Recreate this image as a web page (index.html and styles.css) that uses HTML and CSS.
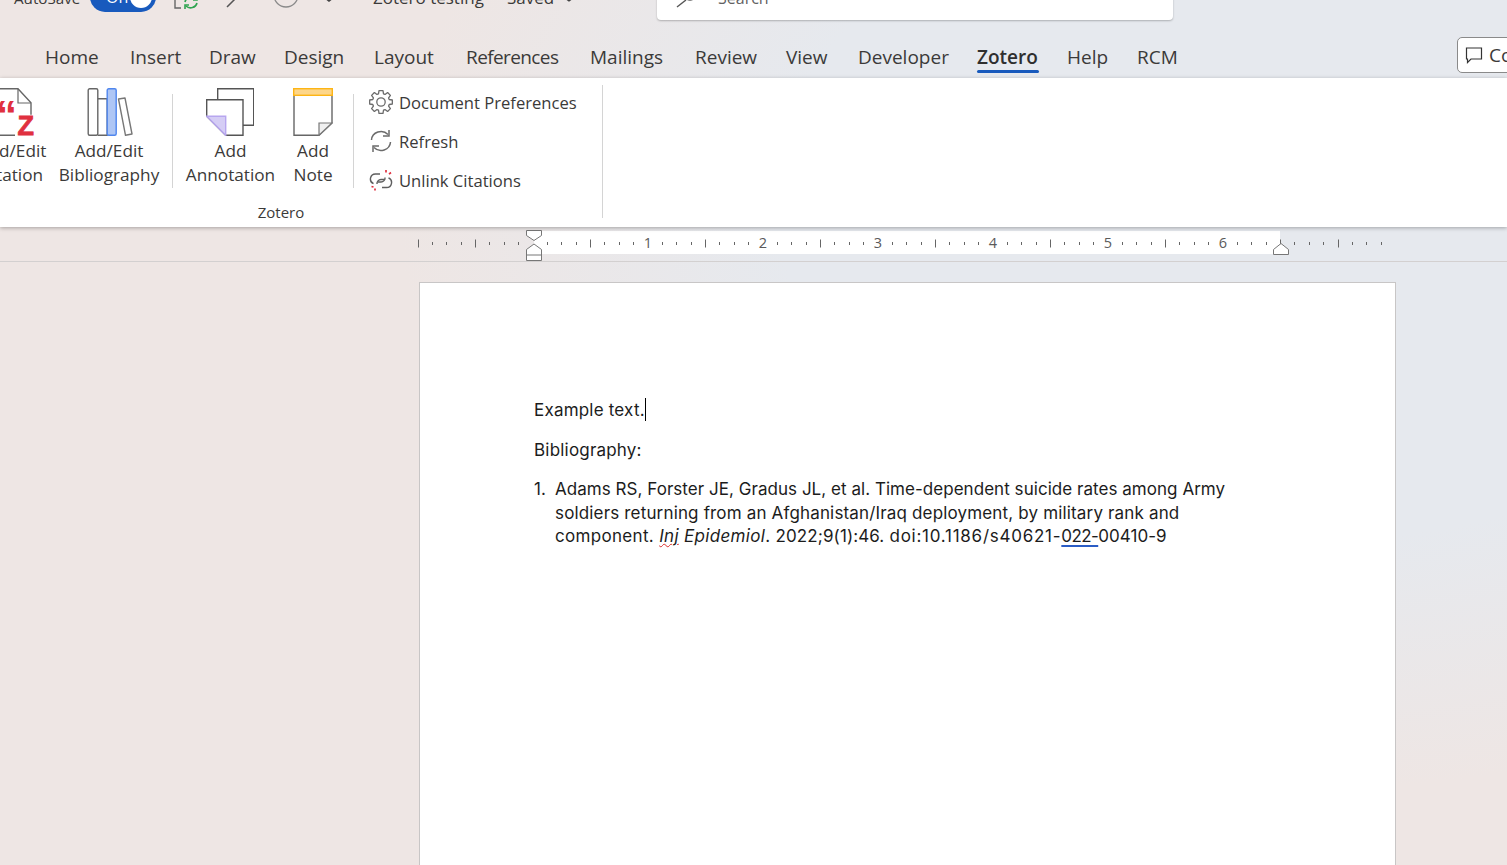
FILE: index.html
```html
<!DOCTYPE html>
<html lang="en">
<head>
    <meta charset="UTF-8">
    <meta name="viewport" content="width=device-width, initial-scale=1.0">
    <title>Zotero testing - Word</title>
    <link rel="stylesheet" href="styles.css">
</head>
<body>
    <div class="titleBar">
        <span class="autosave">AutoSave</span>
        <div class="toggle"><span>On</span><i class="knob"></i></div>
        <svg class="qatIcon saveIcon" width="26" height="24" viewBox="0 0 26 24" fill="none">
            <path d="M8 2H2v20h6" stroke="#666" stroke-width="1.4"/>
            <path d="M12 16a6.5 6 0 0 1 11-3M24 17a6.5 6 0 0 1-11 3" stroke="#2ea44f" stroke-width="1.6"/>
            <path d="M24 10v4h-4M12 23v-4h4" stroke="#2ea44f" stroke-width="1.6"/>
        </svg>
        <svg class="qatIcon redoIcon" width="16" height="24" viewBox="0 0 16 24" fill="none">
            <path d="M1 23L15 9" stroke="#555" stroke-width="1.5"/>
        </svg>
        <svg class="qatIcon circleIcon" width="26" height="26" viewBox="0 0 26 26" fill="none">
            <circle cx="13" cy="13" r="12" stroke="#8a8a8a" stroke-width="1.3"/>
        </svg>
        <svg class="qatIcon moreIcon" width="10" height="6" viewBox="0 0 10 6" fill="none">
            <path d="M1 1l4 3 4-3" stroke="#444" stroke-width="1.5"/>
        </svg>
        <span class="docName">Zotero testing</span>
        <span class="saved">Saved</span>
        <svg class="qatIcon savedChevron" width="10" height="6" viewBox="0 0 10 6" fill="none">
            <path d="M1 1l4 3 4-3" stroke="#444" stroke-width="1.3"/>
        </svg>
        <div class="searchBox">
            <svg width="20" height="14" viewBox="0 0 20 14" fill="none">
                <path d="M1 13L10 6" stroke="#555" stroke-width="1.4"/>
                <circle cx="14" cy="0" r="6" stroke="#555" stroke-width="1.4"/>
            </svg>
            <span>Search</span>
        </div>
    </div>

    <div class="tabs">
        <span class="tab tabFile">File</span>
        <span class="tab">Home</span>
        <span class="tab">Insert</span>
        <span class="tab">Draw</span>
        <span class="tab">Design</span>
        <span class="tab">Layout</span>
        <span class="tab tabTight">References</span>
        <span class="tab">Mailings</span>
        <span class="tab">Review</span>
        <span class="tab">View</span>
        <span class="tab">Developer</span>
        <span class="tab active">Zotero</span>
        <span class="tab">Help</span>
        <span class="tab">RCM</span>
        <div class="commentsBtn">
            <svg width="18" height="18" viewBox="0 0 18 18" fill="none">
                <path d="M1.5 2h15v11H6l-3.5 3.5V13h-1z" stroke="#333" stroke-width="1.2"/>
            </svg>
            <span>Comments</span>
        </div>
    </div>

    <div class="ribbon">
        <div class="ribbonGroup">
            <div class="groupItems">
                <div class="bigBtn citeBtn">
                    <svg width="48" height="48" viewBox="0 0 48 48" fill="none">
                        <path d="M27 47.3H2V0.7h28l13 14v12" stroke="#666" stroke-width="1.4"/>
                        <path d="M30 1v14h13" stroke="#666" stroke-width="1.2"/>
                        <text x="8" y="42" class="citeQuote">“</text>
                        <text x="29.5" y="47" class="citeZ">Z</text>
                    </svg>
                    <span>Add/Edit<br>Citation</span>
                </div>
                <div class="bigBtn bibBtn">
                    <svg width="48" height="48" viewBox="0 0 48 48" fill="none">
                        <rect x="3.2" y="0.7" width="9.6" height="46.6" rx="1.5" stroke="#666" stroke-width="1.4"/>
                        <path d="M12.8 10.7h9.4v36.6h-9.4" stroke="#666" stroke-width="1.4"/>
                        <rect x="22.2" y="0.7" width="9" height="46.6" rx="1.5" fill="#aec6f5" stroke="#4f86ee" stroke-width="1.4"/>
                        <path d="M33.5 11l6.5-1 7 36-6.5 1.3z" stroke="#777" stroke-width="1.4" stroke-linejoin="round"/>
                    </svg>
                    <span>Add/Edit<br>Bibliography</span>
                </div>
                <div class="groupSep sepAnnot"></div>
                <div class="bigBtn annotBtn">
                    <svg width="48" height="48" viewBox="0 0 48 48" fill="none">
                        <path d="M11.7 11V0.7h36v36.6H37" stroke="#555" stroke-width="1.4"/>
                        <path d="M19.7 47.3L0.7 28.3V11.7h36.3v35.6z" fill="#fff" stroke="#555" stroke-width="1.4"/>
                        <path d="M0.7 28.3h19v19z" fill="#d5cdf5" stroke="#b7a6ef" stroke-width="1.4"/>
                    </svg>
                    <span>Add<br>Annotation</span>
                </div>
                <div class="bigBtn noteBtn">
                    <svg width="40" height="48" viewBox="0 0 40 48" fill="none">
                        <path d="M1 7v40.3h25L39 35V7" stroke="#666" stroke-width="1.4"/>
                        <path d="M26 47.3V35h13z" fill="#f0f0f0" stroke="#777" stroke-width="1.2"/>
                        <rect x="0.7" y="0.7" width="38.6" height="6.6" fill="#fdd68a" stroke="#fdb515" stroke-width="1.4"/>
                    </svg>
                    <span>Add<br>Note</span>
                </div>
                <div class="groupSep sepSmall"></div>
                <div class="smallBtns">
                    <div class="smallBtn">
                        <svg width="24" height="24" viewBox="0 0 24 24" fill="none" stroke="#6b6b6b" stroke-width="1.3" stroke-linejoin="round">
                            <polygon points="9.49,3.78 10,0.67 14,0.67 14.51,3.78 16.04,4.41 18.6,2.58 21.42,5.4 19.59,7.96 20.22,9.49 23.33,10 23.33,14 20.22,14.51 19.59,16.04 21.42,18.6 18.6,21.42 16.04,19.59 14.51,20.22 14,23.33 10,23.33 9.49,20.22 7.96,19.59 5.4,21.42 2.58,18.6 4.41,16.04 3.78,14.51 0.67,14 0.67,10 3.78,9.49 4.41,7.96 2.58,5.4 5.4,2.58 7.96,4.41"/>
                            <circle cx="12" cy="12" r="4.2"/>
                        </svg>
                        <span>Document Preferences</span>
                    </div>
                    <div class="smallBtn">
                        <svg width="24" height="24" viewBox="0 0 24 24" fill="none" stroke="#6b6b6b" stroke-width="1.5">
                            <path d="M2.5 11A9.5 9 0 0 1 19 5.5"/>
                            <path d="M20 1v6h-6"/>
                            <path d="M21.5 13A9.5 9 0 0 1 5 18.5"/>
                            <path d="M4 23v-6h6"/>
                        </svg>
                        <span>Refresh</span>
                    </div>
                    <div class="smallBtn">
                        <svg width="24" height="24" viewBox="0 0 24 24" fill="none" stroke="#5f5f5f" stroke-width="1.4">
                            <path d="M11 6H6.5a5 5 0 0 0-2 9.6"/>
                            <path d="M8 16a4 4 0 0 1 4-4.5h3"/>
                            <path d="M13 19.5h4.5a5 5 0 0 0 2-9.6"/>
                            <path d="M16 9.5a4 4 0 0 1-4 4.5H9"/>
                            <path d="M17 2v2.5M22 4.5l-2 1.6M2.5 18.5l2 .5M6 20.5v2" stroke="#e0303f" stroke-width="1.7"/>
                        </svg>
                        <span>Unlink Citations</span>
                    </div>
                </div>
            </div>
            <div class="groupLabel">Zotero</div>
        </div>
    </div>

    <div class="ruler">
        <svg width="1507" height="34" viewBox="0 0 1507 34" fill="none">
            <defs>
                <pattern id="rulerTicks" x="418" y="0" width="115" height="34" patternUnits="userSpaceOnUse">
                    <path d="M14.5 15v3M28.5 15v3M43.5 15v3M57.5 12.5v8M71.5 15v3M86.5 15v3M100.5 15v3" stroke="#666" stroke-width="1"/>
                </pattern>
            </defs>
            <rect x="534" y="4" width="746" height="23" fill="#fff"/>
            <rect x="418" y="0" width="966" height="34" fill="url(#rulerTicks)"/>
            <path d="M418.5 12.5v8M1338.5 12.5v8" stroke="#666"/>
            <text x="648" y="21" class="rulerNum">1</text>
            <text x="763" y="21" class="rulerNum">2</text>
            <text x="878" y="21" class="rulerNum">3</text>
            <text x="993" y="21" class="rulerNum">4</text>
            <text x="1108" y="21" class="rulerNum">5</text>
            <text x="1223" y="21" class="rulerNum">6</text>
            <path d="M526.5 3.5h15v5l-7.5 5-7.5-5z" fill="#fff" stroke="#777"/>
            <path d="M526.5 33.5v-11l7.5-5.5 7.5 5.5v11zM526.5 28h15" fill="#fff" stroke="#777"/>
            <path d="M1273.5 27.5v-5l7.5-6 7.5 6v5z" fill="#fff" stroke="#777"/>
        </svg>
    </div>

    <div class="docArea">
        <div class="page">
            <p>Example text.<i class="caret"></i></p>
            <p>Bibliography:</p>
            <div class="bibEntry">
                <span class="bibNum">1.</span>
                <div>
                    <span class="bibLine lineOne">Adams RS, Forster JE, Gradus JL, et al. Time-dependent suicide rates among Army</span>
                    <span class="bibLine lineTwo">soldiers returning from an Afghanistan/Iraq deployment, by military rank and</span>
                    <span class="bibLine lineThree">component. <em><span class="spellErr">Inj</span> Epidemiol</em>. <span class="citeYear">2022;9(1):46.</span> <span class="citeDoi">doi:10.1186/s40621-</span><span class="grammarErr">022-</span><span class="citeTail">00410-9</span></span>
                </div>
            </div>
        </div>
    </div>
</body>
</html>
```

FILE: styles.css
```css
html, body {
    height: 100%;
}
body {
    margin: 0;
    overflow: hidden;
    display: flex;
    flex-direction: column;
    font-family: 'Open Sans', 'Noto Sans', sans-serif;
    color: #3b3a39;
    background: radial-gradient(ellipse 950px 620px at 1300px 200px, #e6e9ee 55%, #eee6e4 95%);
}

/* title bar, cut by the top of the picture */
.titleBar {
    flex: none;
    height: 40px;
    margin-top: -20px;
    padding: 0 0 20px 14px;
    display: flex;
    align-items: flex-end;
    font-size: 17px;
}
.titleBar > * {
    flex: none;
}
.autosave, .docName, .saved {
    line-height: 24px;
    margin-bottom: 10px;
    white-space: nowrap;
}
.autosave {
    width: 76px;
    font-size: 15.2px;
}
.toggle {
    width: 66px;
    height: 30px;
    margin-bottom: 8px;
    border-radius: 15px;
    background: #185abd;
    color: #fff;
    display: flex;
    align-items: center;
    justify-content: space-between;
    padding: 0 4px 0 16px;
    box-sizing: border-box;
    font-size: 16px;
}
.knob {
    width: 22px;
    height: 22px;
    border-radius: 50%;
    background: #fff;
}
.saveIcon { margin-left: 17px; margin-bottom: 10px; }
.redoIcon { margin-left: 27px; margin-bottom: 12px; }
.circleIcon { margin-left: 31px; margin-bottom: 12px; }
.moreIcon { margin-left: 25px; margin-bottom: 17px; }
.docName { margin-left: 39px; width: 134px; }
.saved { width: 57px; }
.savedChevron { margin-bottom: 17px; }
.searchBox {
    width: 516px;
    height: 40px;
    margin-left: 83px;
    background: #fff;
    border-radius: 4px;
    box-shadow: 0 1px 2px rgba(0, 0, 0, 0.25);
    display: flex;
    align-items: flex-end;
    padding: 0 0 7px 19px;
    box-sizing: border-box;
    color: #616161;
    gap: 22px;
    font-size: 16px;
}
.searchBox svg {
    margin-bottom: 5px;
}
.searchBox span {
    line-height: 24px;
    margin-bottom: 3px;
}

/* tab strip */
.tabs {
    flex: none;
    height: 38px;
    display: grid;
    grid-template-columns: 45px 85px 79px 75px 90px 92px 124px 105px 91px 72px 119px 90px 70px 320px 140px;
    align-items: start;
    font-size: 19px;
    white-space: nowrap;
}
.tab {
    line-height: 34px;
    justify-self: start;
    position: relative;
}
.tabFile {
    margin-left: -31px;
}
.tabTight {
    letter-spacing: -0.6px;
}
.tab.active {
    font-weight: 600;
    color: #2f2f2f;
}
.tab.active::after {
    content: '';
    position: absolute;
    left: 0;
    right: -1px;
    bottom: 1px;
    height: 3px;
    border-radius: 2px;
    background: #185abd;
}
.commentsBtn {
    height: 36px;
    margin-top: -3px;
    background: #fff;
    border: 1px solid #8a8a8a;
    border-radius: 5px;
    box-sizing: border-box;
    display: flex;
    align-items: center;
    gap: 6px;
    padding-left: 7px;
}
.commentsBtn svg {
    flex: none;
}

/* ribbon */
.ribbon {
    flex: none;
    height: 149px;
    background: #fff;
    box-shadow: 0 1px 4px rgba(0, 0, 0, 0.3);
    position: relative;
    z-index: 1;
    overflow: hidden;
    padding-top: 7px;
    box-sizing: border-box;
}
.ribbonGroup {
    width: 643px;
    height: 133px;
    margin-left: -40px;
    box-sizing: border-box;
    border-right: 1px solid #d4d4d4;
    padding-left: 6px;
    display: flex;
    flex-direction: column;
    font-size: 17.2px;
}
.groupItems {
    flex: none;
    display: flex;
    height: 117px;
    padding-top: 3px;
    box-sizing: border-box;
}
.bigBtn {
    flex: none;
    display: flex;
    flex-direction: column;
    align-items: center;
    text-align: center;
    line-height: 24px;
    white-space: nowrap;
}
.bigBtn span {
    margin-top: 3px;
}
.citeBtn { width: 92px; }
.bibBtn { width: 100px; margin-left: 1px; }
.annotBtn { width: 89px; }
.annotBtn svg { margin-left: -2px; }
.noteBtn { width: 40px; margin-left: 18px; }
.citeQuote {
    font: 700 42px 'Liberation Sans', sans-serif;
    fill: #e0303f;
}
.citeZ {
    font: 700 27px 'Liberation Sans', sans-serif;
    fill: #e0303f;
    stroke: #e0303f;
    stroke-width: 0.8px;
}
.groupSep {
    flex: none;
    width: 1px;
    height: 94px;
    margin-top: 6px;
    background: #d4d4d4;
}
.sepAnnot { margin-left: 13px; margin-right: 13px; }
.sepSmall { margin-left: 20px; margin-right: 15px; }
.smallBtns {
    display: flex;
    flex-direction: column;
    gap: 15px;
    padding-top: 2px;
    font-size: 16.6px;
}
.smallBtn {
    display: flex;
    align-items: center;
    gap: 6px;
    height: 24px;
    white-space: nowrap;
}
.groupLabel {
    text-align: center;
    font-size: 15px;
    line-height: 20px;
    margin-left: -6px;
}

/* ruler */
.ruler {
    flex: none;
    height: 35px;
    box-sizing: border-box;
    border-bottom: 1px solid #d3d0d0;
}
.ruler svg {
    display: block;
}
.rulerNum {
    font: 14.5px 'Open Sans', sans-serif;
    fill: #5a5a5a;
    text-anchor: middle;
}

/* document */
.docArea {
    flex: 1;
    min-height: 0;
    padding: 20px 0 0 419px;
}
.page {
    width: 977px;
    height: 900px;
    box-sizing: border-box;
    background: #fff;
    border: 1px solid #c8c6c6;
    padding: 115px 0 0 114px;
    font-family: 'Inter', 'Liberation Sans', sans-serif;
    font-size: 17px;
    line-height: 23.5px;
    letter-spacing: 0.2px;
    color: #1c1c1c;
}
.page p {
    margin: 0 0 16.3px;
}
.caret {
    display: inline-block;
    width: 1px;
    height: 23px;
    background: #000;
    vertical-align: -5px;
}
.bibEntry {
    display: flex;
    white-space: nowrap;
    margin-top: -0.5px;
}
.bibNum {
    width: 21px;
    flex: none;
}
.bibLine {
    display: block;
}
.lineOne { letter-spacing: 0.04px; }
.lineTwo { letter-spacing: 0.16px; }
.lineThree { letter-spacing: 0.32px; }
.citeYear { letter-spacing: 0.1px; }
.citeDoi { letter-spacing: 0.75px; }
.citeTail { letter-spacing: 0.05px; }
.spellErr {
    text-decoration: underline wavy #d92c2c 1px;
}
.grammarErr {
    letter-spacing: -0.6px;
    text-decoration: underline solid #2a5cc5 1.5px;
    text-underline-offset: 3px;
}
```
